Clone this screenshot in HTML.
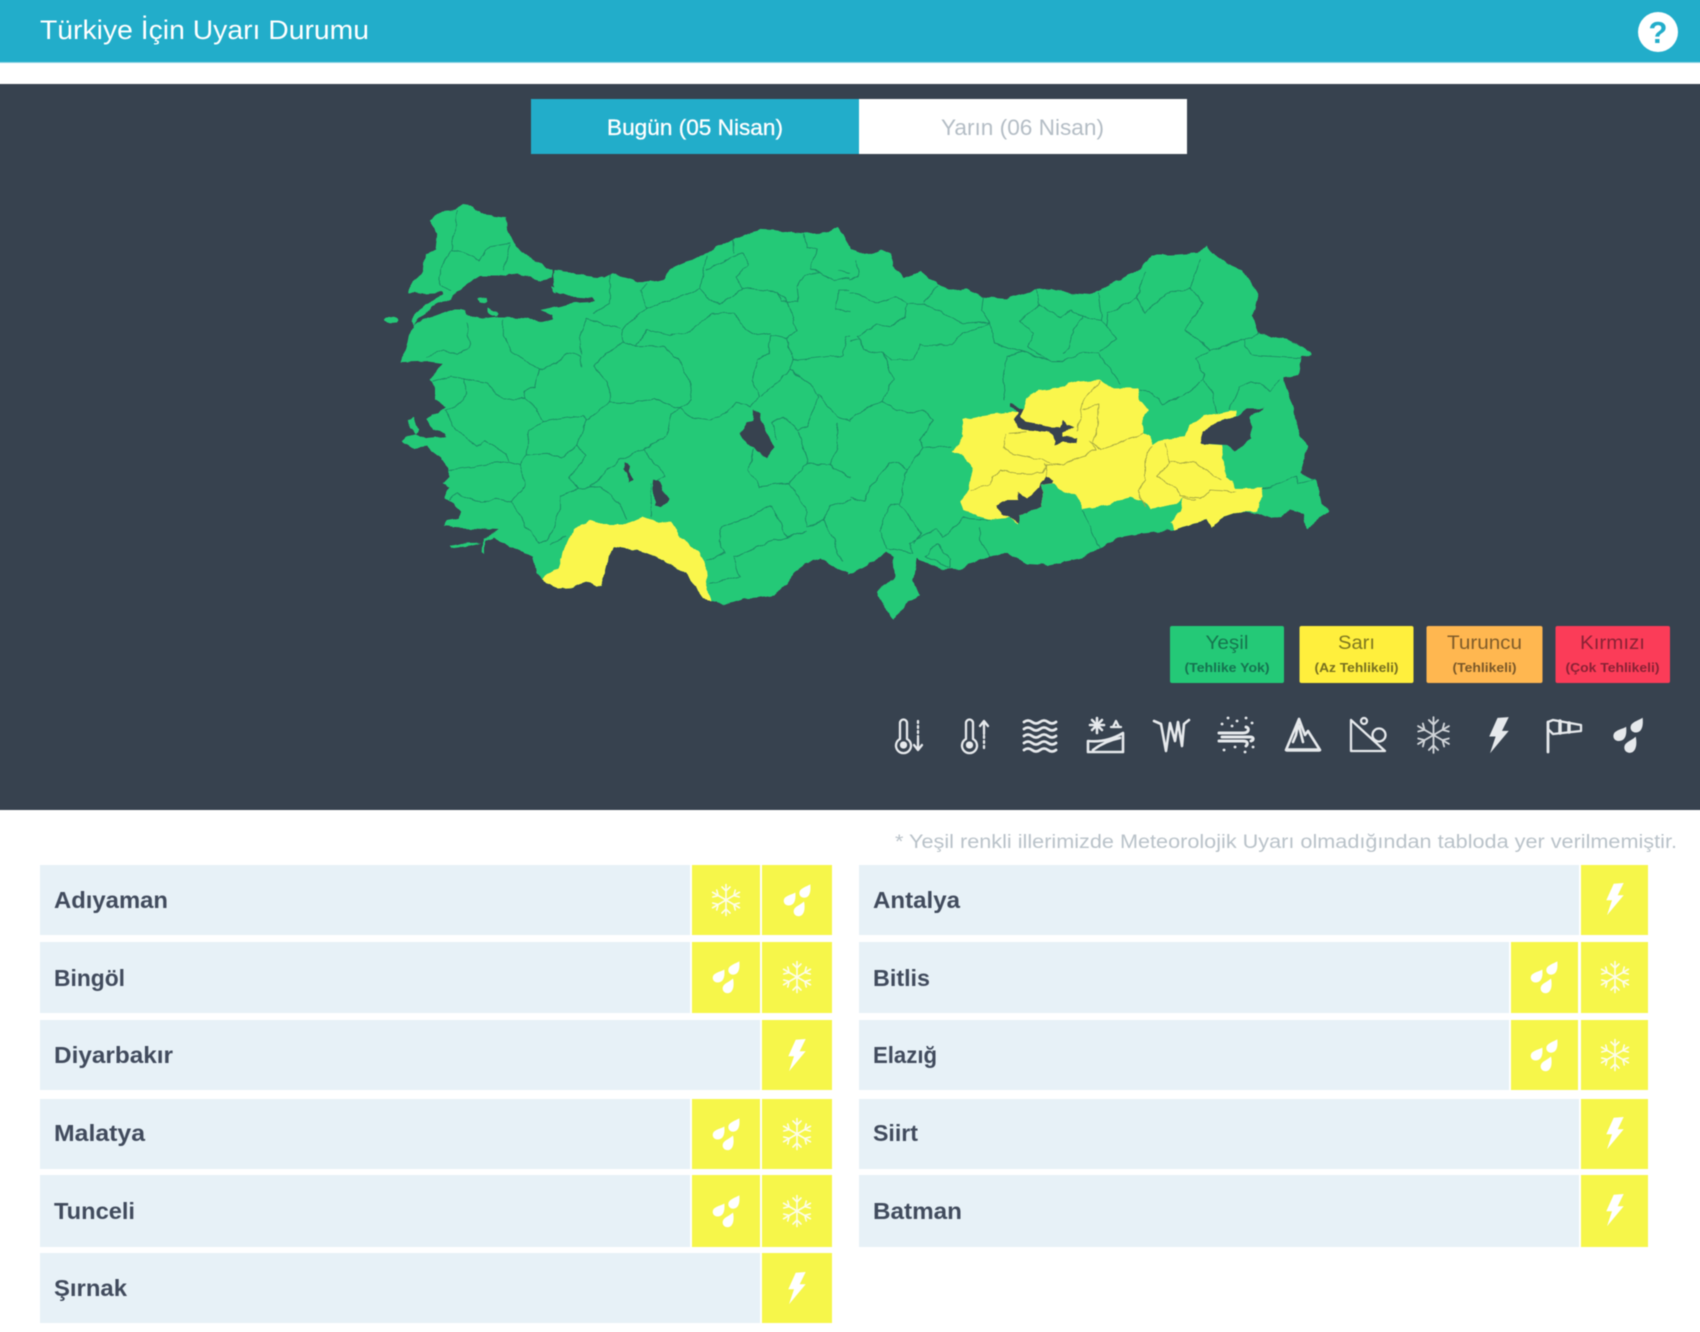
<!DOCTYPE html>
<html lang="tr"><head><meta charset="utf-8"><title>Türkiye İçin Uyarı Durumu</title>
<style>
html,body{margin:0;padding:0;background:#fff;width:1700px;height:1332px;overflow:hidden;position:relative}
svg.main{display:block;position:absolute;left:-10px;top:-10px;filter:blur(.55px);font-family:"Liberation Sans",sans-serif}
.n{font-weight:700;font-size:23px;fill:#414b5d}
.l{font-size:19px;text-anchor:middle}
.s{font-size:13px;font-weight:700;text-anchor:middle}
.ic{fill:none;stroke:#e6e9ec;stroke-width:2.3;stroke-linecap:round;stroke-linejoin:round}
.g{fill:#24c977;fill-rule:evenodd}
.gb{fill:none;stroke:#1c8a63;stroke-width:2.6;stroke-linejoin:round;stroke-linecap:round}
.y{fill:#faf64c}
.yb{fill:none;stroke:#a3a540;stroke-width:2.6;stroke-linejoin:round;stroke-linecap:round}
.d{fill:#37424f}
</style></head><body>
<svg class="main" xmlns="http://www.w3.org/2000/svg" width="1720" height="1352" viewBox="-10 -10 1720 1352">
<defs>
<filter id="rough" filterUnits="userSpaceOnUse" x="360" y="190" width="990" height="450" color-interpolation-filters="sRGB">
<feTurbulence type="fractalNoise" baseFrequency=".09" numOctaves="2" seed="4" result="t"/>
<feDisplacementMap in="SourceGraphic" in2="t" scale="5" xChannelSelector="R" yChannelSelector="G"/>
</filter>
<path id="bolt" d="M-1.3-15.3 8.7-16 2.7-3.7 8.7-3.7-8 16.3-3 1.3-8.7 1.3Z"/>
<g id="drops">
<path d="M13.3-15.7C14-9 13-2.5 7.3-2.3 2-2.3 1-8 4-10.5 7-13 11-14 13.3-15.7Z"/>
<path d="M-1.7-7.5C-1 -1-2 5.3-8.3 5.5-13.6 5.5-14.6 -.2-11.6-2.7-8.6-5.2-4-5.8-1.7-7.5Z"/>
<path d="M7 1.5C8.5 8 7.5 16 1.7 16.2-3.6 16.2-4.5 10.5-2 8-.5 6 4.5 4 7 1.5Z"/>
</g>
<g id="snow" fill="none" stroke-width="1.6" stroke-linecap="round" opacity=".88">
<g id="arm"><path d="M0-15.5V15.5M-4-13 0-9 4-13M-4 13 0 9 4 13"/></g>
<use href="#arm" transform="rotate(60)"/>
<use href="#arm" transform="rotate(120)"/>
</g>
</defs>

<!-- header -->
<rect x="-10" y="-10" width="1720" height="72" fill="#22adca"/>
<rect x="-10" y="62" width="1720" height="1" fill="#8fd3e3"/>
<text x="40" y="39" font-size="26.5" fill="#fff" textLength="329" lengthAdjust="spacingAndGlyphs">Türkiye İçin Uyarı Durumu</text>
<circle cx="1658" cy="32" r="20" fill="#fff"/>
<text x="1658" y="43" font-size="31" font-weight="700" fill="#22adca" text-anchor="middle">?</text>

<!-- dark panel -->
<rect x="-10" y="84" width="1720" height="726" fill="#37424f"/>
<rect x="531" y="99" width="328" height="55" fill="#22adca"/>
<rect x="859" y="99" width="328" height="55" fill="#fff"/>
<text x="607" y="135" font-size="22" fill="#fff" stroke="#fff" stroke-width=".3" textLength="176" lengthAdjust="spacingAndGlyphs">Bugün (05 Nisan)</text>
<text x="941" y="135" font-size="22" fill="#b4bdc5" textLength="163" lengthAdjust="spacingAndGlyphs">Yarın (06 Nisan)</text>

<g filter="url(#rough)">
<!-- map west part -->
<g transform="translate(370 190) scale(.33333)">
<polygon class="g" points="178,90 215,65 250,62 280,45 310,50 330,72 412,80 412,120 425,150 450,180 490,210 530,232 550,240 545,265 515,272 470,258 420,250 380,258 330,258 310,270 260,305 245,325 190,350 150,385 130,405 125,395 135,370 165,345 220,318 218,308 170,310 115,310 115,298 160,240 165,195 195,180 200,130"/>
<polygon class="g" points="555,240 600,245 650,258 700,262 725,252 760,262 820,278 860,275 880,270 900,235 950,215 1000,195 1030,175 1090,148 1170,118 1210,120 1300,130 1370,128 1405,108 1425,150 1443,182 1443,1152 1380,1125 1350,1108 1310,1120 1270,1150 1245,1190 1210,1215 1170,1222 1120,1225 1060,1245 1025,1235 1000,1225 975,1190 950,1150 900,1125 850,1095 800,1080 735,1070 715,1100 705,1150 695,1188 650,1178 600,1195 565,1197 515,1165 500,1150 490,1100 450,1085 420,1070 395,1055 370,1040 345,1050 345,1090 338,1085 340,1045 385,1020 300,1015 250,1012 220,1008 230,992 265,985 275,965 250,940 225,925 240,890 215,880 235,860 235,835 210,800 170,770 130,775 95,750 135,730 170,745 230,740 225,730 190,720 170,690 205,670 225,650 195,630 195,590 180,570 215,520 175,515 90,518 110,470 120,430 130,405 170,385 240,360 285,360 290,375 340,385 380,380 470,385 520,395 550,388 550,375 510,360 560,350 600,340 675,335 670,325 600,320 560,305 545,285"/>
<ellipse cx="65" cy="390" rx="20" ry="10" class="g"/>
<polygon class="g" points="115,690 130,685 145,720 135,730 120,715"/>
<polygon class="g" points="322,325 350,322 352,335 328,338"/>
<polygon class="g" points="350,352 385,368 375,378 352,368"/>
<polygon class="g" points="540,290 555,295 562,310 550,305"/>
<polygon class="g" points="238,1068 280,1060 335,1060 300,1068 245,1075"/>
<path class="gb" d="M262 60 255 120 245 180M245 180 290 190 330 210 360 170 420 160M245 180 210 235 210 285 245 300M420 165 400 240
M400 390 400 440 430 490 480 520 510 540 560 520 590 490 630 495 635 530M650 385 630 440 635 490M290 400 300 470 265 495 220 480 170 500
M510 540 495 590 460 605 465 625 400 630 350 580 280 565 240 560 190 575M280 565 290 610 275 640 225 660M225 660 250 710 320 770 340 750 410 790 415 815 450 825
M465 625 500 660 520 695 640 675 650 690 720 635 715 580 670 525 760 455M520 695 475 720 470 795 530 790 575 805 620 765 650 690M620 765 650 800 595 865 625 895 690 890 745 935 770 985
M470 795 450 825 465 890 425 935 470 1010 510 1060 540 1040 570 960 570 920 625 895M415 815 235 840M425 935 380 925 340 940 260 910 240 930M540 1060 590 1040
M660 890 750 810 820 775 885 860 850 880M840 885 845 980M820 775 890 740 905 670 930 655 850 625 790 640 720 635
M760 455 800 470 880 470 930 510 960 580 965 630 930 655 960 680 1020 690 1070 665 1100 640 1140 650 1170 620M1170 620 1145 570 1165 510 1195 490 1200 435 1250 445 1270 510 1260 540 1175 620
M800 470 830 420 900 435 960 425 1025 370 1090 370 1120 410 1160 435 1200 430M760 455 755 420 800 380 830 355 810 300 830 285M650 385 680 395 750 415M670 370 720 340 720 255
M830 355 930 320 990 295 1020 330 1050 340 1120 295 1225 305 1255 340 1280 420 1250 445M990 295 1000 250 1010 200M1010 240 1090 200 1120 190 1135 225 1100 260 1120 295M1090 150 1090 190
M1225 305 1235 335 1285 335 1280 290 1300 255 1350 250 1390 270M1300 135 1310 170 1345 180 1320 235 1390 270 1443 260M1410 240 1443 250M1443 365 1400 360 1405 300 1443 300
M1270 510 1420 495 1430 440 1443 440M1260 540 1330 590 1345 620 1310 710 1285 720 1240 680 1205 700 1220 750M1345 610 1400 680 1443 695
M1285 725 1310 800 1310 820 1255 880 1170 890 1135 840 1150 780M1310 820 1380 825 1430 860 1443 860M1380 825 1400 780 1405 700
M1255 880 1305 950 1310 1010 1360 990 1390 1050 1415 1115M1305 1025 1190 1060 1090 1100 1110 1160 1020 1180M1310 1025 1250 1040 1205 945 1130 985 1055 1010 1045 1050 1065 1090 1010 1110M1443 930 1380 950 1360 990"/>
<polygon class="y" points="515,1165 565,1135 590,1060 610,1015 660,990 700,1005 760,1005 820,980 870,998 905,995 930,1040 985,1085 1005,1125 1010,1180 1025,1235 1000,1225 975,1190 950,1150 900,1125 850,1095 800,1080 735,1070 715,1100 705,1150 695,1188 650,1178 600,1195 565,1197"/>
<polygon class="d" points="1150,660 1170,670 1175,700 1190,730 1215,770 1190,805 1170,790 1130,760 1112,730 1130,700 1150,690"/>
<polygon class="d" points="848,872 870,875 885,910 900,930 875,950 855,945 855,920 845,895"/>
<polygon class="d" points="765,815 780,825 775,845 790,870 775,880 770,850 760,835"/>
</g>

<!-- map east part -->
<g transform="translate(850 190) scale(.33333)">
<polygon class="g" points="0,180 30,190 70,190 100,178 120,190 130,225 165,265 210,245 260,285 310,300 350,295 400,320 470,325 560,300 600,295 660,310 720,315 790,280 870,235 910,195 960,195 1040,190 1070,165 1085,190 1130,220 1175,240 1225,310 1210,380 1225,430 1300,445 1360,470 1385,495 1355,500 1345,555 1300,565 1330,650 1350,740 1375,770 1350,850 1400,875 1415,940 1440,960 1405,985 1370,1018 1360,970 1320,960 1270,985 1220,970 1170,965 1110,985 1085,1015 1070,990 1030,1000 975,1020 880,1030 800,1045 750,1075 690,1105 600,1125 530,1120 470,1090 420,1100 330,1135 280,1140 200,1105 190,1170 210,1215 170,1240 130,1290 100,1250 80,1205 135,1160 130,1100 110,1085 55,1125 0,1155"/>
<path class="gb" d="M20 210 25 260 0 265M0 310 40 320 85 340 140 320 170 340 165 380 120 410 80 405 20 440 40 480 100 490 130 570 95 635 35 665 0 690M20 450 0 455
M170 340 220 340 280 370 340 400 400 395 420 400M220 335 260 290M100 490 120 510 190 510 210 465 305 465 340 430 420 400
M400 320 395 360 420 400 435 460 520 485 470 500 460 560 465 630M520 485 600 515 640 515 700 485 745 490 785 545 810 580M560 300 565 345 510 395 550 430 530 470 600 515
M565 345 630 380 660 360 700 380 755 390 745 310M700 380 670 420 660 470 640 490M755 390 800 445 750 485M755 390 770 410 775 370 860 325 885 245
M860 325 885 370 950 310 1020 295 1050 210M1020 295 1060 340 1005 420 1080 480 1180 450M1180 450 1200 495 1355 505M1080 480 1035 510 1065 550 1060 570 1000 620 940 640 900 605 865 600M1060 570 1090 610 1100 670M1180 450 1230 430
M1140 660 1170 590 1205 575 1260 600 1290 570M1235 900 1340 860 1345 880 1395 870
M95 635 170 670 215 660 250 690 210 750 220 775 305 770M220 775 170 840 145 815 120 820 60 890 45 935 0 925M170 840 150 940 120 945 90 1020 110 1075 190 1090 180 1060 230 1030 260 1020 280 1040 340 985 420 990
M260 1060 225 1100 300 1135 300 1110 260 1060M150 940 215 1030 190 1060M390 1010 390 1050 420 1100M700 965 750 1075"/>
<polygon class="y" points="335,690 400,675 480,665 520,660 530,625 570,600 640,590 680,575 750,570 790,595 865,595 870,630 895,660 875,700 880,730 905,740 905,765 945,745 1005,740 1015,705 1060,680 1160,660 1155,680 1100,695 1050,760 1115,765 1125,860 1150,875 1155,895 1240,895 1220,965 1170,965 1110,985 1085,1015 1070,990 1030,1000 975,1020 960,1000 990,960 1000,925 980,940 900,955 875,930 840,920 780,945 700,960 680,915 645,905 610,880 575,885 575,945 510,975 505,1000 480,985 420,990 340,960 330,935 355,895 370,830 335,790 305,785 340,740"/>
<path class="yb" d="M470 735 460 770 480 790 580 810 640 825 740 780 720 750M480 730 530 725M640 825 590 820 575 850 500 850 455 840 425 860 420 885 360 900M585 820 590 860
M750 575 700 625 690 680 680 720M700 660 745 645 745 700 730 760 750 780M750 780 850 745 880 730M905 770 885 810 885 870 865 905 885 950
M945 760 960 820 920 860 980 895 990 920M960 815 1035 820 1115 870M990 920 1050 925 1080 900 1155 905M1000 925 1035 930"/>
<polygon class="d" points="480,640 520,660 510,680 530,695 600,710 630,710 640,690 650,705 675,708 640,725 640,740 685,745 680,760 640,755 615,765 610,740 590,725 530,720 500,715 490,690 505,665 480,650"/>
<polygon class="d" points="590,860 610,870 605,880 575,885 575,945 545,960 510,975 510,998 480,985 455,975 440,945 470,930 505,930 505,905 530,930 565,895"/>
<polygon class="d" points="1050,760 1060,725 1100,695 1160,680 1190,655 1245,655 1200,680 1205,745 1175,770 1155,785 1130,765"/>
</g>
</g>

<!-- legend -->
<rect x="1170" y="626" width="114" height="57" rx="2" fill="#24c977"/>
<rect x="1299.5" y="626" width="114" height="57" rx="2" fill="#ffef3d"/>
<rect x="1426.5" y="626" width="116" height="57" rx="2" fill="#ffb750"/>
<rect x="1555.5" y="626" width="114.5" height="57" rx="2" fill="#fb3c58"/>
<text class="l" x="1227" y="649" fill="#16764f" textLength="43" lengthAdjust="spacingAndGlyphs">Yeşil</text>
<text class="s" x="1227" y="672" fill="#157350" textLength="85" lengthAdjust="spacingAndGlyphs">(Tehlike Yok)</text>
<text class="l" x="1356.5" y="649" fill="#7f7820" textLength="37" lengthAdjust="spacingAndGlyphs">Sarı</text>
<text class="s" x="1356.5" y="672" fill="#77701f" textLength="84" lengthAdjust="spacingAndGlyphs">(Az Tehlikeli)</text>
<text class="l" x="1484.5" y="649" fill="#7f5c2a" textLength="75" lengthAdjust="spacingAndGlyphs">Turuncu</text>
<text class="s" x="1484.5" y="672" fill="#7a5828" textLength="64" lengthAdjust="spacingAndGlyphs">(Tehlikeli)</text>
<text class="l" x="1612.5" y="649" fill="#8a2235" textLength="65" lengthAdjust="spacingAndGlyphs">Kırmızı</text>
<text class="s" x="1612.5" y="672" fill="#8a2235" textLength="94" lengthAdjust="spacingAndGlyphs">(Çok Tehlikeli)</text>

<!-- hazard icons -->
<g class="ic">
<path d="M900 723a3.5 3.5 0 0 1 7 0V739a7.5 7.5 0 1 1-7 0Z"/><circle cx="903.5" cy="745" r="2.5" fill="#e6e9ec"/>
<path d="M918 721V737" stroke-dasharray="2 3"/><path d="M918 738V749M914 745 918 750 922 745"/>
<path d="M966 723a3.5 3.5 0 0 1 7 0V739a7.5 7.5 0 1 1-7 0Z"/><circle cx="969.5" cy="745" r="2.5" fill="#e6e9ec"/>
<path d="M984 722V734M980 726 984 721 988 726"/><path d="M984 736V749" stroke-dasharray="2 3"/>
<path stroke-width="2.8" d="M1024 722q4-3 8 0t8 0 8 0 8 0M1024 729q4-3 8 0t8 0 8 0 8 0M1024 736q4-3 8 0t8 0 8 0 8 0M1024 743q4-3 8 0t8 0 8 0 8 0M1024 750q4-3 8 0t8 0 8 0 8 0"/>
<path stroke-width="2.6" d="M1088 741Q1106 743 1123 733V752H1088ZM1093 750Q1105 741 1120 738"/>
<path stroke-width="2.6" d="M1097 718V733M1090 725H1104M1092 720 1102 730M1102 720 1092 730" stroke-dasharray="3 1.5"/>
<path d="M1111 727H1121M1113 727 1116 721 1119 727"/>
<path stroke-width="2.6" d="M1154 721 1161 724 1166 751 1170 723 1175 741 1178 722 1182 746 1184 724 1189 720"/>
<path stroke-width="3" d="M1219 733H1243c6 0 7-5 3-6M1222 737H1250c4 0 4 3 1 4M1219 741H1243c5 0 5 3 3 5"/>
<path d="M1228 718h.1M1237 721h.1M1246 718h.1M1252 723h.1M1222 724h.1M1232 726h.1M1224 750h.1M1235 747h.1M1245 752h.1M1253 747h.1" stroke-width="2.8"/>
<path stroke-width="2.6" d="M1299 719 1286 750H1320L1308 731 1305 735ZM1299 719 1296 735 1293 742M1299 726 1303 742"/>
<path stroke-width="3.5" d="M1287 750H1319"/>
<path d="M1351 720V751H1385L1351 720"/><circle cx="1379" cy="735" r="6.5"/><circle cx="1364" cy="721" r="3"/>
<path d="M1548 722V752" stroke-width="2.8"/>
<path d="M1548 722 1553 720 1581 725V731L1553 734 1548 729Z"/>
<path d="M1560 721V733M1569 723V732" stroke-width="3.5"/>
</g>
<g fill="#e6e9ec" stroke="#e6e9ec">
<use href="#snow" transform="translate(1433.5 735) scale(1.15)"/>
<use href="#bolt" stroke="none" transform="translate(1499 735) scale(1.12)"/>
<use href="#drops" stroke="none" transform="translate(1628 735) scale(1.1)"/>
</g>

<!-- note -->
<text x="895" y="848" font-size="19" fill="#b9c2c9" textLength="782" lengthAdjust="spacingAndGlyphs">* Yeşil renkli illerimizde Meteorolojik Uyarı olmadığından tabloda yer verilmemiştir.</text>

<!-- rows -->
<g fill="#e7f1f7">
<rect x="40" y="865" width="650" height="70"/><rect x="40" y="942" width="650" height="71"/>
<rect x="40" y="1020" width="720" height="70"/><rect x="40" y="1099" width="650" height="70"/>
<rect x="40" y="1175" width="650" height="72"/><rect x="40" y="1253" width="720" height="70"/>
<rect x="859" y="865" width="720" height="70"/><rect x="859" y="942" width="650" height="71"/>
<rect x="859" y="1020" width="650" height="70"/><rect x="859" y="1099" width="720" height="70"/>
<rect x="859" y="1175" width="720" height="72"/>
</g>
<g fill="#f6f64a">
<rect x="692" y="865" width="68" height="70"/><rect x="762" y="865" width="70" height="70"/>
<rect x="692" y="942" width="68" height="71"/><rect x="762" y="942" width="70" height="71"/>
<rect x="762" y="1020" width="70" height="70"/>
<rect x="692" y="1099" width="68" height="70"/><rect x="762" y="1099" width="70" height="70"/>
<rect x="692" y="1175" width="68" height="72"/><rect x="762" y="1175" width="70" height="72"/>
<rect x="762" y="1253" width="70" height="70"/>
<rect x="1581" y="865" width="67" height="70"/>
<rect x="1511" y="942" width="67" height="71"/><rect x="1581" y="942" width="67" height="71"/>
<rect x="1511" y="1020" width="67" height="70"/><rect x="1581" y="1020" width="67" height="70"/>
<rect x="1581" y="1099" width="67" height="70"/>
<rect x="1581" y="1175" width="67" height="72"/>
</g>
<text class="n" x="54" y="908" textLength="114" lengthAdjust="spacingAndGlyphs">Adıyaman</text>
<text class="n" x="54" y="986" textLength="71" lengthAdjust="spacingAndGlyphs">Bingöl</text>
<text class="n" x="54" y="1063" textLength="119" lengthAdjust="spacingAndGlyphs">Diyarbakır</text>
<text class="n" x="54" y="1141" textLength="91" lengthAdjust="spacingAndGlyphs">Malatya</text>
<text class="n" x="54" y="1219" textLength="81" lengthAdjust="spacingAndGlyphs">Tunceli</text>
<text class="n" x="54" y="1296" textLength="73" lengthAdjust="spacingAndGlyphs">Şırnak</text>
<text class="n" x="873" y="908" textLength="87" lengthAdjust="spacingAndGlyphs">Antalya</text>
<text class="n" x="873" y="986" textLength="57" lengthAdjust="spacingAndGlyphs">Bitlis</text>
<text class="n" x="873" y="1063" textLength="64" lengthAdjust="spacingAndGlyphs">Elazığ</text>
<text class="n" x="873" y="1141" textLength="45" lengthAdjust="spacingAndGlyphs">Siirt</text>
<text class="n" x="873" y="1219" textLength="89" lengthAdjust="spacingAndGlyphs">Batman</text>

<!-- cell icons -->
<g fill="#fff" stroke="#fff">
<use href="#snow" transform="translate(726 900)"/>
<use href="#drops" stroke="none" transform="translate(797 900)"/>
<use href="#drops" stroke="none" transform="translate(726 977)"/>
<use href="#snow" transform="translate(797 977)"/>
<use href="#bolt" stroke="none" transform="translate(797 1055)"/>
<use href="#drops" stroke="none" transform="translate(726 1134)"/>
<use href="#snow" transform="translate(797 1134)"/>
<use href="#drops" stroke="none" transform="translate(726 1211)"/>
<use href="#snow" transform="translate(797 1211)"/>
<use href="#bolt" stroke="none" transform="translate(797 1288)"/>
<use href="#bolt" stroke="none" transform="translate(1615 899)"/>
<use href="#drops" stroke="none" transform="translate(1544 977)"/>
<use href="#snow" transform="translate(1615 977)"/>
<use href="#drops" stroke="none" transform="translate(1544 1055)"/>
<use href="#snow" transform="translate(1615 1055)"/>
<use href="#bolt" stroke="none" transform="translate(1615 1133)"/>
<use href="#bolt" stroke="none" transform="translate(1615 1210)"/>
</g>
</svg>
</body></html>
